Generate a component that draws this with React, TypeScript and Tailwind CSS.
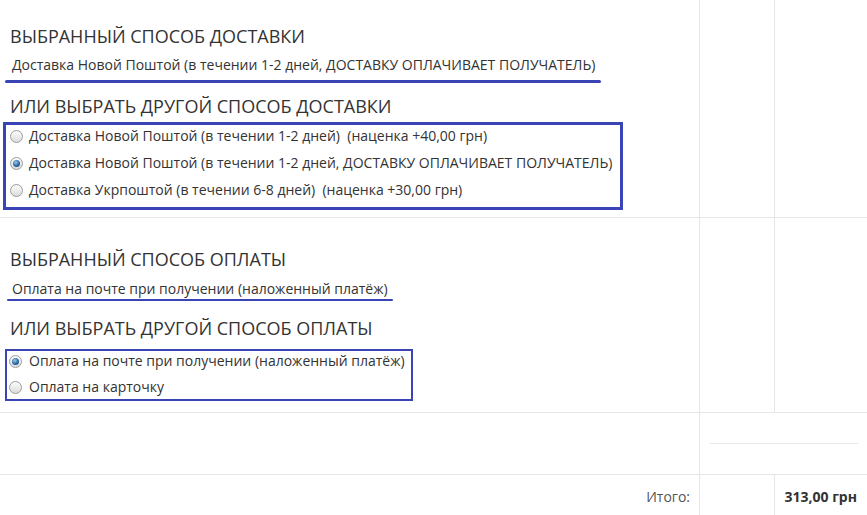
import React from 'react';

const FONT = { fontFamily: '"Open Sans", "Noto Sans", Arial, sans-serif' };

const DELIVERY = [
  { label: 'Доставка Новой Поштой (в течении 1-2 дней)\u00a0 (наценка +40,00 грн)', checked: false },
  { label: 'Доставка Новой Поштой (в течении 1-2 дней, ДОСТАВКУ ОПЛАЧИВАЕТ ПОЛУЧАТЕЛЬ)', checked: true },
  { label: 'Доставка Укрпоштой (в течении 6-8 дней)\u00a0 (наценка +30,00 грн)', checked: false },
];

const PAYMENT = [
  { label: 'Оплата на почте при получении (наложенный платёж)', checked: true },
  { label: 'Оплата на карточку', checked: false },
];

function Radio({ checked }: { checked: boolean }) {
  return (
    <span className="relative flex h-[13px] w-[13px] shrink-0 items-center justify-center rounded-full border border-[#9c9c9c] bg-[linear-gradient(to_bottom,#fcfcfc,#dcdcdc)]">
      {checked && (
        <span className="h-[7px] w-[7px] rounded-full bg-[radial-gradient(circle_at_40%_35%,#9cc8ea,#2a6aa6_55%,#123a63)]" />
      )}
    </span>
  );
}

function Heading({ children }: { children: React.ReactNode }) {
  return <h3 className="text-[18px] leading-[24px] uppercase text-[#333]">{children}</h3>;
}

export default function App() {
  return (
    <div className="h-[515px] w-[867px] overflow-hidden bg-white text-[14px] text-[#333]" style={FONT}>
      {/* Delivery */}
      <div className="flex h-[218px] border-b border-[#e6e6e6]">
        <div className="w-[700px] border-r border-[#e6e6e6] pl-[10px] pt-[24px]">
          <Heading>Выбранный способ доставки</Heading>
          <p className="mt-[7px] pl-[2px] leading-[20px]">
            Доставка Новой Поштой (в течении 1-2 дней, ДОСТАВКУ ОПЛАЧИВАЕТ ПОЛУЧАТЕЛЬ)
          </p>
          <div className="-ml-[5px] mt-[5px] h-[3px] w-[596px] rounded-full bg-[#3b44b5]" />
          <div className="mt-[11px]">
            <Heading>Или выбрать другой способ доставки</Heading>
          </div>
          <div className="-ml-[7px] mt-[4px] w-[620px] border-[3px] border-[#3b44b5] pb-[7px] pt-[1px]">
            <div className="space-y-[7px]">
              {DELIVERY.map((d) => (
                <label key={d.label} className="flex items-center gap-[6px] pl-[4px] leading-[20px]">
                  <Radio checked={d.checked} />
                  <span>{d.label}</span>
                </label>
              ))}
            </div>
          </div>
        </div>
        <div className="w-[75px] border-r border-[#e6e6e6]" />
        <div className="flex-1" />
      </div>

      {/* Payment */}
      <div className="flex h-[195px] border-b border-[#e6e6e6]">
        <div className="w-[700px] border-r border-[#e6e6e6] pl-[10px] pt-[29px]">
          <Heading>Выбранный способ оплаты</Heading>
          <p className="mt-[8px] pl-[2px] leading-[20px]">Оплата на почте при получении (наложенный платёж)</p>
          <div className="-ml-[3px] h-[2px] w-[386px] rounded-full bg-[#3b44b5]" />
          <div className="mt-[15px]">
            <Heading>Или выбрать другой способ оплаты</Heading>
          </div>
          <div className="-ml-[5px] mt-[9px] w-[408px] border-2 border-[#3b44b5] pb-[2px]">
            <div className="space-y-[6px]">
              {PAYMENT.map((p) => (
                <label key={p.label} className="flex items-center gap-[7px] pl-[2px] leading-[20px]">
                  <Radio checked={p.checked} />
                  <span>{p.label}</span>
                </label>
              ))}
            </div>
          </div>
        </div>
        <div className="w-[75px] border-r border-[#e6e6e6]" />
        <div className="flex-1" />
      </div>

      {/* Spacer row */}
      <div className="flex h-[62px] border-b border-[#e6e6e6]">
        <div className="w-[700px] border-r border-[#e6e6e6]" />
        <div className="flex flex-1 items-center pl-[10px] pr-[9px]">
          <div className="h-px w-full bg-[#e8e8e8]" />
        </div>
      </div>

      {/* Total */}
      <div className="flex h-[40px]">
        <div className="w-[700px] border-r border-[#e6e6e6] pr-[9px] pt-[12px] text-right leading-[20px] text-[#555]">
          Итого:
        </div>
        <div className="w-[75px] border-r border-[#e6e6e6]" />
        <div className="flex-1 pr-[10px] pt-[12px] text-right font-bold leading-[20px]">313,00 грн</div>
      </div>
    </div>
  );
}
